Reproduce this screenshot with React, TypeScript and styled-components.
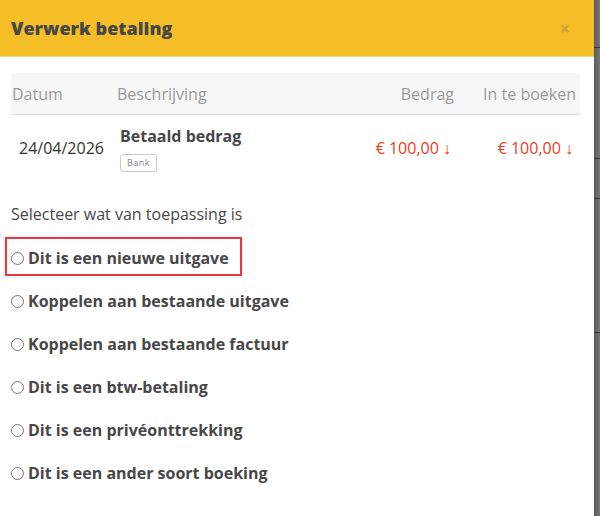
import styled, { createGlobalStyle } from "styled-components";

const GlobalStyle = createGlobalStyle`
  html, body {
    margin: 0;
    padding: 0;
    background: #6c6c6c;
  }
  body {
    font-family: "Open Sans", "Noto Sans", sans-serif;
  }
`;

const options = [
  "Dit is een nieuwe uitgave",
  "Koppelen aan bestaande uitgave",
  "Koppelen aan bestaande factuur",
  "Dit is een btw-betaling",
  "Dit is een privéonttrekking",
  "Dit is een ander soort boeking",
];

const App = () => {
  return (
    <>
      <GlobalStyle />
      <Page>
        <Modal>
          <Header>
            <Title>Verwerk betaling</Title>
            <Close>×</Close>
          </Header>
          <Body>
            <Table>
              <thead>
                <tr>
                  <Th $width={100}>Datum</Th>
                  <Th>Beschrijving</Th>
                  <Th $right>Bedrag</Th>
                  <Th $right $width={117}>In te boeken</Th>
                </tr>
              </thead>
              <tbody>
                <tr>
                  <DateCell>24/04/2026</DateCell>
                  <DescCell>
                    <DescTitle>Betaald bedrag</DescTitle>
                    <Badge>Bank</Badge>
                  </DescCell>
                  <AmountCell>€ 100,00 ↓</AmountCell>
                  <AmountCell>€ 100,00 ↓</AmountCell>
                </tr>
              </tbody>
            </Table>
            <Prompt>Selecteer wat van toepassing is</Prompt>
            <OptionList>
              {options.map((o, i) => (
                <Option key={o} $highlight={i === 0}>
                  <Radio type="radio" name="keuze" />
                  <span>{o}</span>
                </Option>
              ))}
            </OptionList>
          </Body>
        </Modal>
        <Backdrop>
          <BgLine $top={47} />
          <BgLine $top={158} />
          <BgLine $top={198} />
          <BgLine $top={332} />
        </Backdrop>
      </Page>
    </>
  );
};

const Page = styled.div`
  display: flex;
  width: 600px;
  height: 516px;
  overflow: hidden;
`;

const Modal = styled.div`
  width: 594px;
  flex-shrink: 0;
  background: #fff;
  display: flex;
  flex-direction: column;
`;

const Backdrop = styled.div`
  flex: 1;
  position: relative;
  background: linear-gradient(to right, #5a5a5a, #777);
`;

const BgLine = styled.div<{ $top: number }>`
  position: absolute;
  left: 0;
  right: 0;
  top: ${(p) => p.$top}px;
  height: 1px;
  background: #333;
`;

const Header = styled.div`
  height: 56px;
  background: #f5be27;
  border-bottom: 1px solid #f8d77a;
  display: flex;
  align-items: center;
  justify-content: space-between;
  padding: 0 24px 0 11px;
`;

const Title = styled.h4`
  margin: 0;
  font-size: 18px;
  font-weight: 800;
  color: #474747;
`;

const Close = styled.span`
  font-size: 18px;
  font-weight: 700;
  color: #c9a03a;
  line-height: 1;
`;

const Body = styled.div`
  padding: 16px 14px 0 11px;
`;

const Table = styled.table`
  width: 100%;
  border-collapse: collapse;
  font-size: 16px;
`;

const Th = styled.th<{ $right?: boolean; $width?: number }>`
  background: #f7f7f7;
  color: #9a9a9a;
  font-weight: 400;
  text-align: ${(p) => (p.$right ? "right" : "left")};
  height: 41px;
  padding: 0 4px 0 1px;
  border-bottom: 1px solid #dcdcdc;
  width: ${(p) => (p.$width ? `${p.$width}px` : "auto")};
`;

const DateCell = styled.td`
  color: #333;
  padding: 0 0 0 8px;
  vertical-align: middle;
  height: 60px;
`;

const DescCell = styled.td`
  padding: 10px 0 9px 4px;
  vertical-align: top;
`;

const DescTitle = styled.div`
  font-weight: 700;
  color: #474747;
  margin-bottom: 2px;
`;

const Badge = styled.span`
  display: inline-block;
  font-size: 9px;
  line-height: 12px;
  color: #888;
  border: 1px solid #ccc;
  border-radius: 3px;
  padding: 2px 6px;
  letter-spacing: 0.5px;
`;

const AmountCell = styled.td`
  color: #e8401c;
  font-size: 16px;
  text-align: right;
  padding: 0 7px 0 0;
  vertical-align: middle;
`;

const Prompt = styled.p`
  margin: 22px 0 12px 0;
  font-size: 16px;
  line-height: 22px;
  color: #474747;
`;

const OptionList = styled.div`
  display: flex;
  flex-direction: column;
`;

const Option = styled.label<{ $highlight?: boolean }>`
  display: flex;
  align-items: center;
  gap: 4px;
  height: 39px;
  margin-bottom: 4px;
  margin-left: -6px;
  padding: 3px 0 0 4px;
  width: ${(p) => (p.$highlight ? "237px" : "auto")};
  box-sizing: border-box;
  border: 2px solid ${(p) => (p.$highlight ? "#e63946" : "transparent")};
  box-shadow: ${(p) => (p.$highlight ? "0 0 3px rgba(0,0,0,0.15)" : "none")};
  font-size: 16px;
  font-weight: 700;
  color: #474747;
`;

const Radio = styled.input`
  margin: 0;
  width: 13px;
  height: 13px;
`;

export default App;
